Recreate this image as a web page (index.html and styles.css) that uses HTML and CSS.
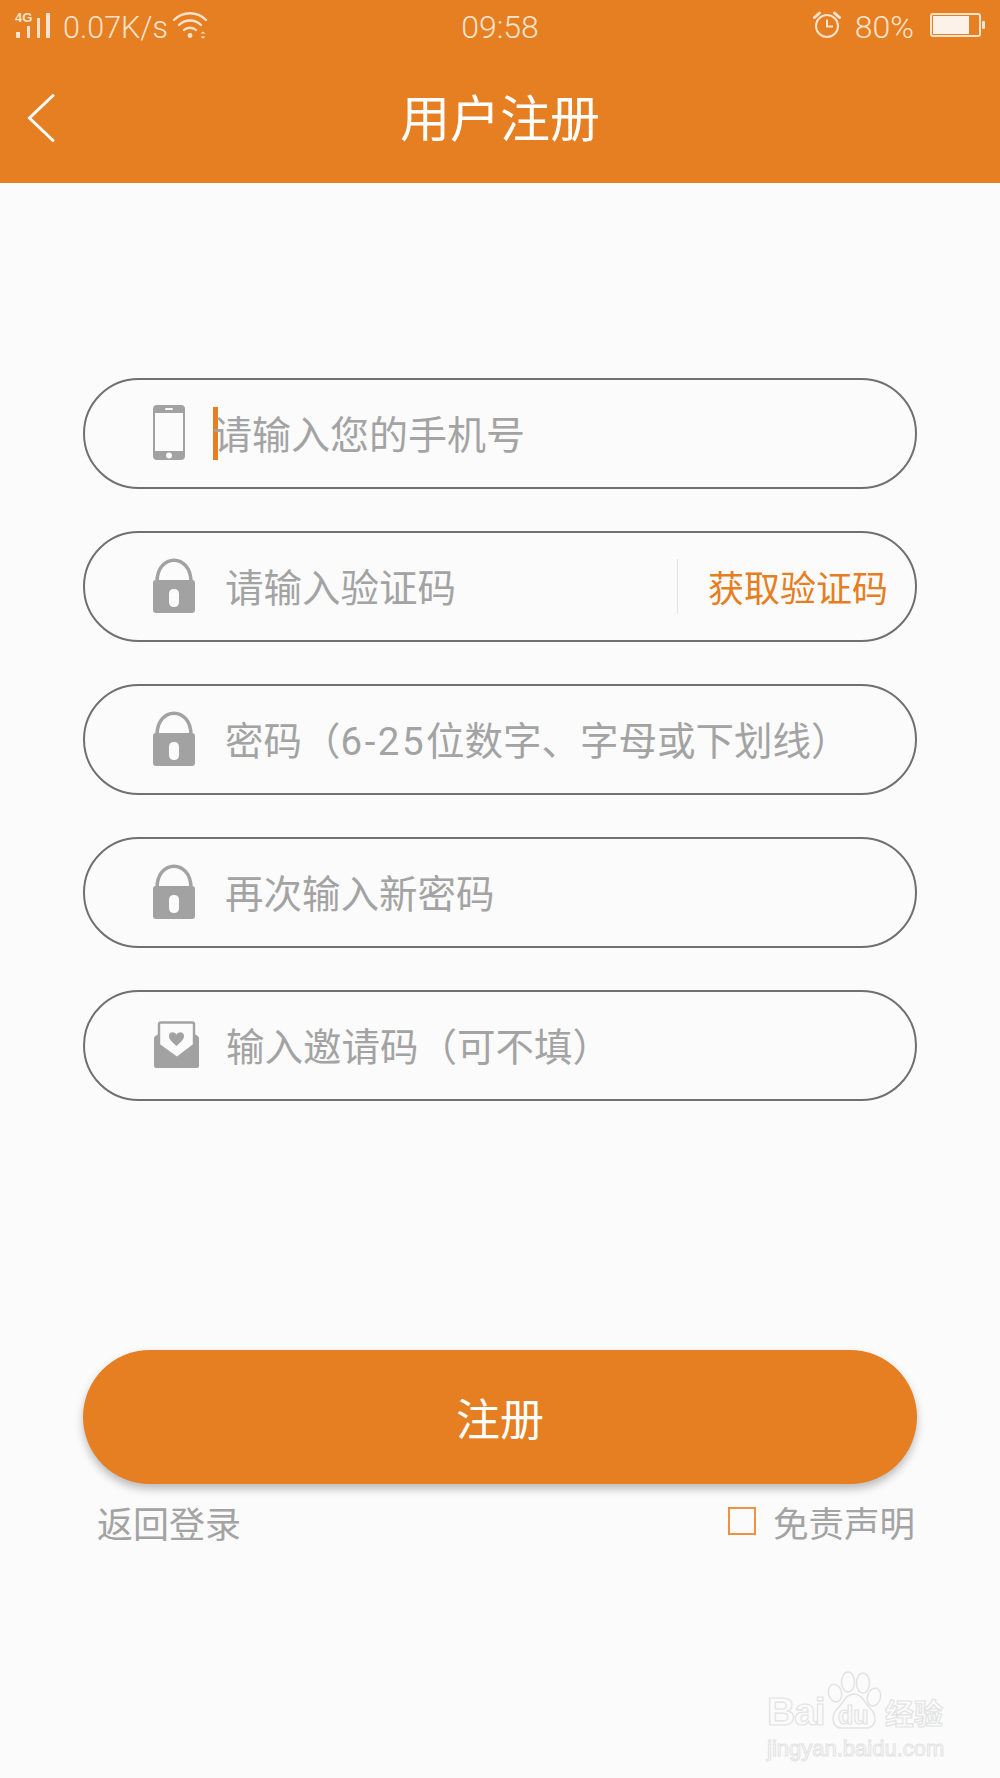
FILE: index.html
```html
<!DOCTYPE html>
<html lang="zh-CN">
<head>
  <meta charset="UTF-8" />
  <title>用户注册</title>
  <link rel="stylesheet" href="styles.css">
</head>
<body>
  <div class="head">
    <div class="status">
      <div class="status-left">
        <svg class="ic-signal" width="36" height="30" viewBox="0 -2 36 30">
          <text x="0" y="10" class="net">4G</text>
          <rect x="1" y="20" width="4" height="6" fill="#fbe3cd"/>
          <rect x="12" y="14" width="3" height="12" fill="#fbe3cd"/>
          <rect x="22" y="6" width="3" height="20" fill="#fbe3cd"/>
          <rect x="31" y="1" width="4" height="25" fill="#fbe3cd"/>
        </svg>
        <span class="speed">0.07K/s</span>
        <svg class="ic-wifi" width="36" height="28" viewBox="0 0 36 28" fill="none" stroke="#fbe3cd" stroke-width="2.4" stroke-linecap="round">
          <path d="M2 8C11 -1 25 -1 34 8"/>
          <path d="M7 13C13 7 23 7 29 13"/>
          <path d="M12 18C15 15 21 15 24 18"/>
          <circle cx="18" cy="23.5" r="2.4" fill="#fbe3cd" stroke="none"/>
          <path d="M28.500 21.500L31 19.500L33.500 21.500ZM28.500 24.500L31 26.500L33.500 24.500Z" fill="#fbe3cd" stroke="none"/>
        </svg>
      </div>
      <span class="clock">09:58</span>
      <div class="status-right">
        <svg class="ic-alarm" width="28" height="27" viewBox="0 0 28 27" fill="none" stroke="#fbe3cd" stroke-width="2">
          <circle cx="14" cy="15" r="11"/>
          <path d="M14 8.500V15.500H20"/>
          <path d="M1.500 6.500L6.500 2M26.500 6.500L21.500 2" stroke-width="3" stroke-linecap="round"/>
        </svg>
        <span class="pct">80%</span>
        <svg class="ic-batt" width="55" height="24" viewBox="0 0 55 24">
          <rect x="1" y="1" width="49" height="22" rx="2" fill="none" stroke="#fbe3cd" stroke-width="2"/>
          <rect x="3" y="3" width="36" height="18" fill="#fdf2ea"/>
          <rect x="52" y="8" width="3" height="8" rx="1" fill="#fbe3cd"/>
        </svg>
      </div>
    </div>
    <div class="titlebar">
      <svg class="back" width="30" height="52" viewBox="0 0 30 52" fill="none" stroke="#fff" stroke-width="3" stroke-linecap="round">
        <path d="M26 3.500L2.500 26L26 48.500"/>
      </svg>
      <h1 class="title">用户注册</h1>
    </div>
  </div>

  <div class="content">
    <form class="fields">
      <div class="field">
        <svg class="ic" width="42" height="56" viewBox="0 0 42 56">
          <path fill-rule="evenodd" fill="#a2a2a2" d="M4 0H28Q32 0 32 4V51Q32 55 28 55H4Q0 55 0 51V4Q0 0 4 0ZM2 8V46H30V8Z"/>
          <rect x="12" y="3" width="8" height="2" rx="1" fill="#fbfbfb"/>
          <circle cx="16" cy="50.500" r="3" fill="#fbfbfb"/>
        </svg>
        <i class="caret"></i>
        <span class="hint hint-first">请输入您的手机号</span>
      </div>
      <div class="field">
        <svg class="ic" width="42" height="56" viewBox="0 0 42 56">
          <path d="M4 24C4 -5 38 -5 38 24" fill="none" stroke="#a2a2a2" stroke-width="3.500"/>
          <path fill-rule="evenodd" fill="#a2a2a2" d="M3 22H39Q42 22 42 25V52Q42 55 39 55H3Q0 55 0 52V25Q0 22 3 22ZM21 31Q16 31 16 36V44Q16 49 21 49Q26 49 26 44V36Q26 31 21 31Z"/>
        </svg>
        <span class="hint">请输入验证码</span>
        <span class="get-code">获取验证码</span>
      </div>
      <div class="field">
        <svg class="ic" width="42" height="56" viewBox="0 0 42 56">
          <path d="M4 24C4 -5 38 -5 38 24" fill="none" stroke="#a2a2a2" stroke-width="3.500"/>
          <path fill-rule="evenodd" fill="#a2a2a2" d="M3 22H39Q42 22 42 25V52Q42 55 39 55H3Q0 55 0 52V25Q0 22 3 22ZM21 31Q16 31 16 36V44Q16 49 21 49Q26 49 26 44V36Q26 31 21 31Z"/>
        </svg>
        <span class="hint">密码（<span class="num">6-25</span>位数字、字母或下划线）</span>
      </div>
      <div class="field">
        <svg class="ic" width="42" height="56" viewBox="0 0 42 56">
          <path d="M4 24C4 -5 38 -5 38 24" fill="none" stroke="#a2a2a2" stroke-width="3.500"/>
          <path fill-rule="evenodd" fill="#a2a2a2" d="M3 22H39Q42 22 42 25V52Q42 55 39 55H3Q0 55 0 52V25Q0 22 3 22ZM21 31Q16 31 16 36V44Q16 49 21 49Q26 49 26 44V36Q26 31 21 31Z"/>
        </svg>
        <span class="hint">再次输入新密码</span>
      </div>
      <div class="field">
        <svg class="ic ic-invite" width="45" height="50" viewBox="0 0 45 50">
          <path fill="#a2a2a2" d="M0 17Q0 15 5 13V24L23 38L40 24V13Q45 15 45 17V45Q45 47 43 47H2Q0 47 0 45Z"/>
          <path fill="none" stroke="#a2a2a2" stroke-width="2.400" d="M5 24V3Q5 1.500 7 1.500H38Q40 1.500 40 3V24L23 37Z"/>
          <path fill="#a2a2a2" d="M22.500 25C17 20 15 18 15 15C15 11 20 10 22.500 13.500C25 10 30 11 30 15C30 18 28 20 22.500 25Z"/>
        </svg>
        <span class="hint">输入邀请码（可不填）</span>
      </div>
    </form>

    <button class="submit" type="button">注册</button>

    <div class="links">
      <span class="link">返回登录</span>
      <div class="agree">
        <i class="check"></i>
        <span class="link">免责声明</span>
      </div>
    </div>
  </div>

  <div class="mark">
    <div class="mark-top">
      <span class="mark-bai">Bai</span>
      <svg width="58" height="60" viewBox="0 0 58 60" fill="#fbfbfb" stroke="#e3e3e3" stroke-width="1.500">
        <ellipse cx="9" cy="23" rx="6.500" ry="9" transform="rotate(-15 9 23)"/>
        <ellipse cx="22" cy="12" rx="6.500" ry="10"/>
        <ellipse cx="37" cy="13" rx="6.500" ry="10"/>
        <ellipse cx="48" cy="27" rx="6.500" ry="9" transform="rotate(15 48 27)"/>
        <path d="M28 24C20 24 18 32 12 38C4 46 6 58 16 58H40C50 58 52 46 44 38C38 32 36 24 28 24Z"/>
      </svg>
      <span class="mark-du">du</span>
      <span class="mark-cn">经验</span>
    </div>
    <div class="mark-url">jingyan.baidu.com</div>
  </div>
</body>
</html>
```

FILE: styles.css
```css
* { box-sizing: border-box; }

html, body {
  margin: 0;
  height: 100%;
}

body {
  position: relative;
  overflow: hidden;
  background-color: #fbfbfb;
  font-family: Roboto, "Noto Sans CJK SC", sans-serif;
}

.head {
  height: 183px;
  background-color: #e67e22;
}

.status {
  position: relative;
  display: flex;
  justify-content: space-between;
  align-items: center;
  height: 54px;
  padding: 0 15px;
  font-size: 31px;
  font-weight: 300;
  color: #fbe3cd;
}

.status-left, .status-right {
  display: flex;
  align-items: center;
}

.ic-signal { margin-top: -4px; }

.ic-batt { margin-top: -4px; }

.net {
  font-family: "Liberation Sans", sans-serif;
  font-size: 13px;
  font-weight: 700;
  fill: #fbe3cd;
}

.speed {
  margin: 0 5px 0 12px;
  font-size: 30.500px;
}

.ic-wifi { margin: -2px 0 0 -1px; }

.clock {
  position: absolute;
  left: 0;
  right: 0;
  text-align: center;
  font-size: 32px;
}

.pct {
  margin: 0 16px 0 14px;
  font-size: 32px;
}

.ic-alarm { margin-top: -5px; }

.titlebar {
  position: relative;
  display: flex;
  align-items: center;
  justify-content: center;
  height: 129px;
  padding-bottom: 7px;
}

.back {
  position: absolute;
  left: 27px;
  top: 38px;
}

.title {
  margin: 0;
  font-family: "Noto Sans CJK SC", sans-serif;
  font-size: 50px;
  font-weight: 400;
  color: #fff;
}

.content {
  padding: 195px 83px 0;
}

.fields {
  display: flex;
  flex-direction: column;
  gap: 42px;
}

.field {
  display: flex;
  align-items: center;
  height: 111px;
  padding: 0 27px 0 68px;
  border: 2px solid #707070;
  border-radius: 56px;
}

.ic {
  flex: none;
  margin-top: -2px;
}

.ic-invite { margin: 0 -3px 0 1px; }

.hint {
  margin: -4px 0 0 30px;
  font-size: 38.500px;
  color: #a3a3a3;
}

.hint-first {
  margin-left: -5px;
  font-size: 39px;
}

.num { letter-spacing: 2.500px; }

.caret {
  flex: none;
  width: 5px;
  height: 53px;
  margin-left: 18px;
  background-color: #e67e22;
}

.get-code {
  margin-left: auto;
  padding: 7px 0 7px 30px;
  border-left: 1px solid #e2e2e2;
  font-family: "Noto Sans CJK SC", sans-serif;
  font-size: 36px;
  line-height: 41px;
  color: #e67e22;
}

.submit {
  display: block;
  width: 100%;
  height: 134px;
  margin-top: 249px;
  border: 0;
  border-radius: 67px;
  background-color: #e67e22;
  box-shadow: 0 5px 8px rgba(0,0,0,0.25);
  font-family: "Noto Sans CJK SC", sans-serif;
  font-size: 44px;
  color: #fff;
}

.links {
  display: flex;
  justify-content: space-between;
  align-items: center;
  margin-top: 13px;
  padding: 0 2px 0 14px;
}

.link {
  font-family: "Noto Sans CJK SC", sans-serif;
  font-size: 36px;
  line-height: 50px;
  color: #a3a3a3;
}

.agree {
  display: flex;
  align-items: center;
  gap: 17px;
}

.agree .link { font-size: 35.500px; }

.check {
  width: 28px;
  height: 28px;
  margin-top: -2px;
  border: 2px solid #f09040;
}

.mark {
  position: absolute;
  left: 767px;
  top: 1670px;
  font-family: "Liberation Sans", sans-serif;
  color: #fbfbfb;
  -webkit-text-stroke: 1.200px #e3e3e3;
}

.mark-top {
  position: relative;
  display: flex;
  align-items: flex-end;
  height: 60px;
  font-weight: 700;
}

.mark-bai {
  width: 59px;
  font-size: 39px;
  line-height: 36px;
  letter-spacing: -1px;
}

.mark-du {
  position: absolute;
  left: 71px;
  bottom: 1px;
  font-size: 25px;
  line-height: 28px;
}

.mark-cn {
  margin-left: 1px;
  font-family: "Noto Sans CJK SC", sans-serif;
  font-size: 29px;
  line-height: 36px;
}

.mark-url {
  margin-top: 6px;
  font-size: 22px;
  line-height: 26px;
  -webkit-text-stroke-width: 1px;
}
```
